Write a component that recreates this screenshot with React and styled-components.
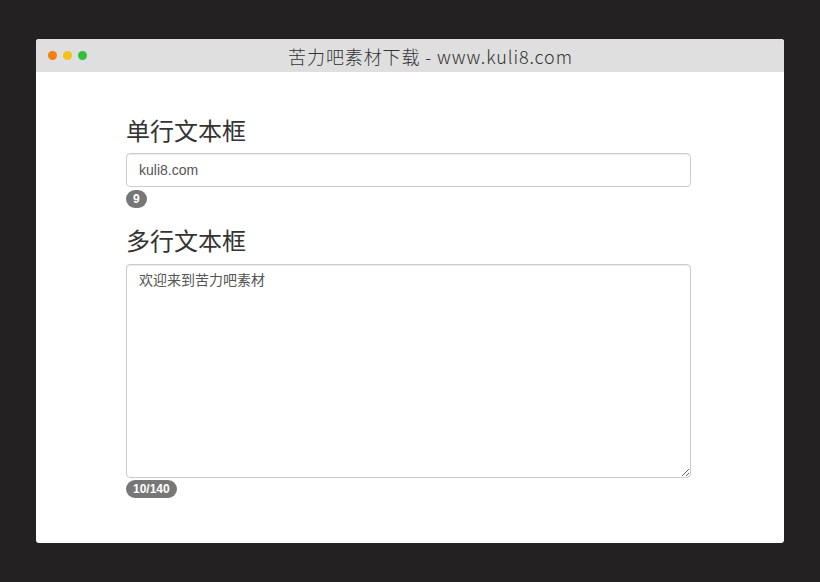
import React, { useState } from 'react';
import styled, { createGlobalStyle } from 'styled-components';

const GlobalStyle = createGlobalStyle`
  html, body {
    margin: 0;
    padding: 0;
    background: #242122;
  }

  body {
    font-family: 'Liberation Sans', Arial, 'Noto Sans CJK SC', sans-serif;
  }

  * {
    box-sizing: border-box;
  }
`;

const Page = styled.div`
  padding: 39px 36px 39px 36px;
`;

const Window = styled.div`
  width: 748px;
  height: 504px;
  background: #fff;
  border-radius: 3px;
  overflow: hidden;
  display: flex;
  flex-direction: column;
`;

const TitleBar = styled.div`
  height: 33px;
  flex: none;
  background: #dfdfdf;
  display: flex;
  align-items: center;
  padding: 0 12px;
`;

const Dots = styled.div`
  display: flex;
  gap: 6px;
`;

const Dot = styled.span`
  width: 9px;
  height: 9px;
  border-radius: 50%;
  background: ${({ $color }) => $color};
`;

const Title = styled.div`
  flex: 1;
  text-align: center;
  padding-left: 2px;
  font-family: 'Noto Sans CJK SC', sans-serif;
  font-size: 18px;
  font-weight: 300;
  color: #333;
  letter-spacing: 0.9px;
`;

const Content = styled.div`
  padding: 25px 0 0 90px;
`;

const Form = styled.div`
  width: 565px;
`;

const Heading = styled.h3`
  margin: 20px 0 10px;
  font-family: 'Noto Sans CJK SC', sans-serif;
  font-weight: 400;
  font-size: 24px;
  line-height: 1.1;
  color: #333;
`;

const Field = styled.input`
  display: block;
  width: 100%;
  height: 34px;
  padding: 6px 12px;
  font-family: 'Liberation Sans', Arial, 'Noto Sans CJK SC', sans-serif;
  font-size: 14px;
  color: #555;
  border: 1px solid #ccc;
  border-radius: 4px;
  box-shadow: inset 0 1px 1px rgba(0, 0, 0, 0.075);
  outline: none;
`;

const Area = styled.textarea`
  display: block;
  width: 100%;
  height: 214px;
  padding: 6px 12px;
  margin: 0;
  font-family: 'Liberation Sans', Arial, 'Noto Sans CJK SC', sans-serif;
  font-size: 14px;
  line-height: 1.42857;
  color: #555;
  border: 1px solid #ccc;
  border-radius: 4px;
  box-shadow: inset 0 1px 1px rgba(0, 0, 0, 0.075);
  outline: none;
`;

const Counter = styled.div`
  font-size: 14px;
  line-height: 20px;
  height: 20px;
`;

const Badge = styled.span`
  display: inline-block;
  min-width: 10px;
  padding: 3px 7px;
  font-family: 'Liberation Sans', Arial, sans-serif;
  font-size: 12px;
  font-weight: 700;
  line-height: 1;
  color: #fff;
  text-align: center;
  vertical-align: middle;
  background: #777;
  border-radius: 10px;
`;

const App = () => {
  const [single, setSingle] = useState('kuli8.com');
  const [multi, setMulti] = useState('欢迎来到苦力吧素材');

  return (
    <>
      <GlobalStyle />
      <Page>
        <Window>
          <TitleBar>
            <Dots>
              <Dot $color="#f57e0e" />
              <Dot $color="#f3c21a" />
              <Dot $color="#33c13b" />
            </Dots>
            <Title>苦力吧素材下载 - www.kuli8.com</Title>
          </TitleBar>
          <Content>
            <Form>
              <Heading>单行文本框</Heading>
              <Field value={single} onChange={(e) => setSingle(e.target.value)} />
              <Counter>
                <Badge>{single.length}</Badge>
              </Counter>

              <Heading>多行文本框</Heading>
              <Area value={multi} onChange={(e) => setMulti(e.target.value)} />
              <Counter>
                <Badge>{multi.length + 1}/140</Badge>
              </Counter>
            </Form>
          </Content>
        </Window>
      </Page>
    </>
  );
};

export default App;
